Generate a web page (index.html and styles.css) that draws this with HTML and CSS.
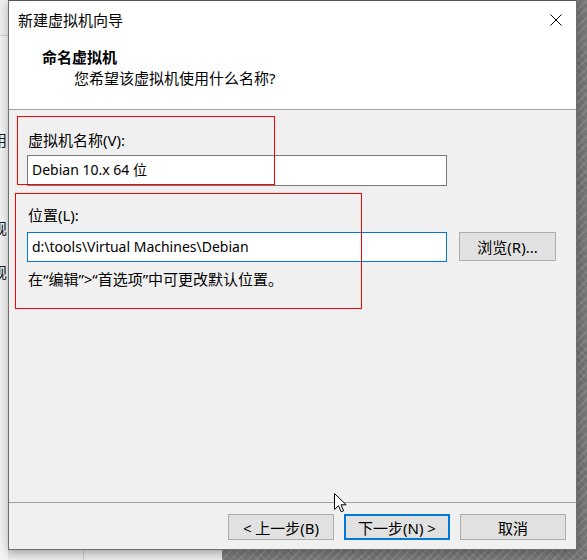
FILE: index.html
```html
<!DOCTYPE html>
<html lang="zh-CN">
<head>
<meta charset="utf-8">
<title>新建虚拟机向导</title>
<link rel="stylesheet" href="styles.css">
</head>
<body>
<div class="screen">
  <div class="strip">
    <div class="strip-top"></div>
    <span class="peek peek1">用</span>
    <span class="peek peek2">规</span>
    <span class="peek peek3">规</span>
  </div>
  <div class="dialog">
    <div class="titlebar">
      <span class="title">新建虚拟机向导</span>
      <svg class="close" width="12" height="12" viewBox="0 0 12 12"><path d="M0.5 0.5L11.5 11.5M11.5 0.5L0.5 11.5" stroke="#000" stroke-width="1" fill="none"/></svg>
    </div>
    <div class="header">
      <div class="h-title">命名虚拟机</div>
      <div class="h-sub">您希望该虚拟机使用什么名称?</div>
    </div>
    <div class="sep"></div>
    <div class="content">
      <div class="label label1">虚拟机名称(V):</div>
      <div class="input">Debian 10.x 64 位</div>
      <div class="label label2">位置(L):</div>
      <div class="row">
        <div class="input focus">d:\tools\Virtual Machines\Debian</div>
        <div class="btn browse">浏览(R)...</div>
      </div>
      <div class="hint">在“编辑”&gt;“首选项”中可更改默认位置。</div>
    </div>
    <div class="sep"></div>
    <div class="footer">
      <div class="btn">&lt; 上一步(B)</div>
      <div class="btn default">下一步(N) &gt;</div>
      <div class="btn">取消</div>
    </div>
  </div>
  <div class="below">
    <div class="below-light"></div>
  </div>
  <div class="redbox box1"></div>
  <div class="redbox box2"></div>
  <svg class="cursor" width="13" height="20" viewBox="0 0 13 20"><path d="M0.5 0.5L0.5 16.5L4.5 12.7L7.2 18.8L9.6 17.8L7 11.8L12.2 11.8Z" fill="#fff" stroke="#000" stroke-width="1" stroke-linejoin="miter"/></svg>
</div>
</body>
</html>
```
FILE: styles.css
```css
* { box-sizing: border-box; }
html, body { margin: 0; padding: 0; }
body {
  width: 587px;
  height: 560px;
  overflow: hidden;
  font-family: "Noto Sans", "Noto Sans CJK SC", sans-serif;
  font-size: 15px;
  color: #000;
  background-color: #787878;
  background-image:
    repeating-linear-gradient(135deg, rgba(255,255,255,0.10) 0 2px, transparent 2px 6px),
    repeating-linear-gradient(45deg, rgba(0,0,0,0.08) 0 1px, transparent 1px 5px);
}
.screen {
  position: relative;
  width: 587px;
  height: 560px;
  display: grid;
  grid-template-columns: 8px 569px 1fr;
  grid-template-rows: 550px 10px;
}
.strip {
  grid-row: 1 / 3;
  grid-column: 1;
  background: #f4f4f4;
  overflow: hidden;
  display: flex;
  flex-direction: column;
}
.strip-top {
  height: 36px;
  flex: none;
  background: #f0f0f0;
  border-bottom: 1px solid #d4d4d4;
}
.peek {
  display: block;
  margin-left: -8px;
  line-height: 20px;
  color: #222;
  white-space: nowrap;
}
.peek1 { margin-top: 94px; }
.peek2 { margin-top: 68px; }
.peek3 { margin-top: 24px; }

.dialog {
  grid-row: 1;
  grid-column: 2;
  display: flex;
  flex-direction: column;
  background: #f0f0f0;
  border: 1px solid #6f6f6f;
  border-top-color: #555;
  box-shadow: 0 2px 10px rgba(0,0,0,0.28);
  position: relative;
  z-index: 1;
}
.titlebar {
  height: 37px;
  flex: none;
  background: #fff;
  display: flex;
  align-items: center;
  justify-content: space-between;
  padding: 0 14px 0 9px;
}
.title { line-height: 20px; padding-top: 1px; }
.close { display: block; }
.header {
  height: 71px;
  flex: none;
  background: #fff;
  padding: 9px 0 0 33px;
}
.h-title { font-weight: bold; line-height: 21px; }
.h-sub { line-height: 21px; margin-left: 32px; }
.sep {
  height: 1px;
  flex: none;
  background: #a0a0a0;
}
.content {
  flex: 1;
  padding: 20px 0 0 18px;
}
.label { line-height: 20px; padding-left: 1px; }
.label2 { margin-top: 19px; }
.input {
  width: 420px;
  height: 31px;
  margin-top: 5px;
  background: #fff;
  border: 1px solid #7a7a7a;
  padding-left: 4px;
  font-size: 14px;
  line-height: 28px;
  white-space: nowrap;
}
.row {
  display: flex;
  align-items: flex-start;
  margin-top: 7px;
}
.row .input { margin-top: 0; height: 30px; line-height: 27px; }
.input.focus { border-color: #0078d7; }
.btn {
  height: 26px;
  width: 106px;
  background: #e1e1e1;
  border: 1px solid #adadad;
  display: flex;
  align-items: center;
  justify-content: center;
  white-space: nowrap;
}
.browse {
  width: 97px;
  height: 29px;
  margin-left: 12px;
}
.btn.default { border: 2px solid #0078d7; }
.hint { line-height: 20px; margin-top: 7px; padding-left: 1px; }
.footer {
  height: 46px;
  flex: none;
  display: flex;
  justify-content: flex-end;
  align-items: flex-start;
  gap: 10px;
  padding: 11px 10px 0 0;
}

.below {
  grid-row: 2;
  grid-column: 2;
}
.below-light {
  width: 214px;
  height: 10px;
  background: linear-gradient(#dcdcdc, #ececec);
}
.below-light::after {
  content: "";
  display: block;
  margin-left: 75px;
  width: 1px;
  height: 10px;
  background: #c8c8c8;
}

.redbox {
  position: absolute;
  border: 1px solid #ff0000;
  z-index: 2;
}
.box1 { left: 17px; top: 116px; width: 258px; height: 69px; }
.box2 { left: 15px; top: 193px; width: 347px; height: 116px; }
.cursor {
  position: absolute;
  left: 334px;
  top: 493px;
  z-index: 3;
}
```
